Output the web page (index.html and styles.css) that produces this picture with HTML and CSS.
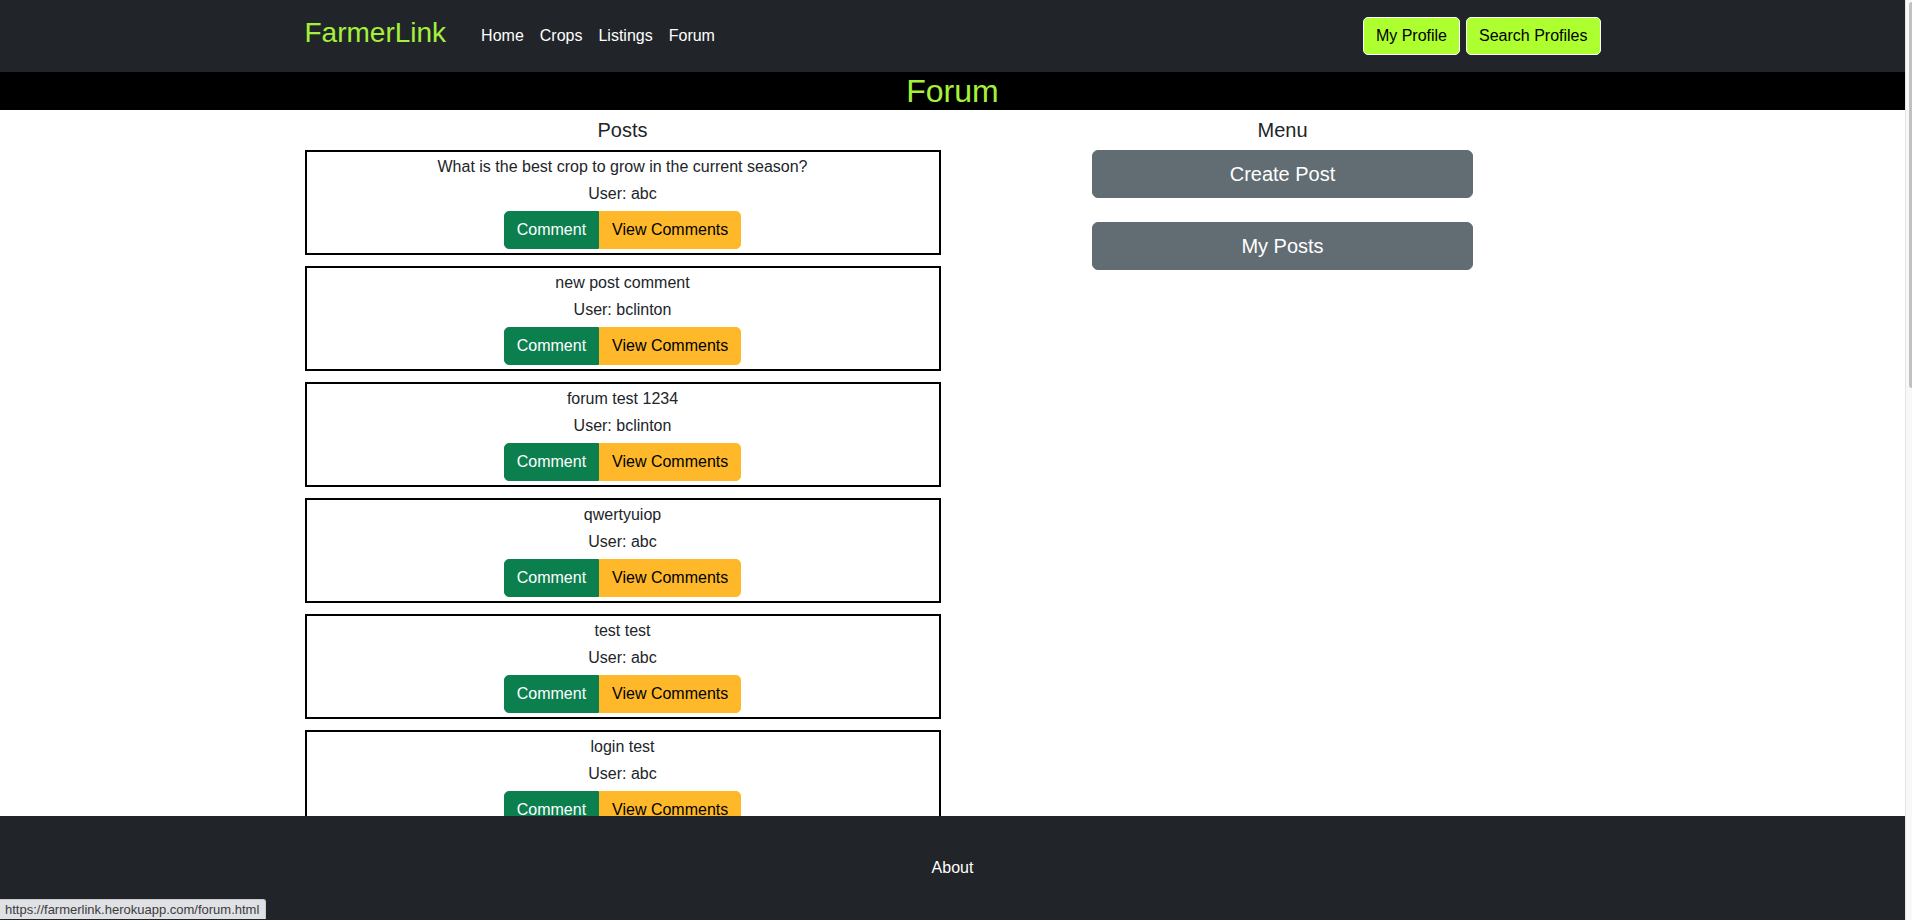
FILE: index.html
```html
<!DOCTYPE html>
<html lang="en">
<head>
<meta charset="utf-8">
<title>FarmerLink - Forum</title>
<link rel="stylesheet" href="styles.css">
</head>
<body>
<div class="page">
  <header class="navbar">
    <div class="container nav-inner">
      <a class="brand" href="#">FarmerLink</a>
      <ul class="nav-links">
        <li><a href="#">Home</a></li>
        <li><a href="#">Crops</a></li>
        <li><a href="#">Listings</a></li>
        <li><a href="#">Forum</a></li>
      </ul>
      <div class="nav-actions">
        <a class="btn btn-lime" href="#">My Profile</a>
        <a class="btn btn-lime" href="#">Search Profiles</a>
      </div>
    </div>
  </header>
  <h2 class="page-title">Forum</h2>
  <main class="main">
    <div class="container grid">
      <section class="col">
        <h5 class="col-title">Posts</h5>
        <div class="post">
          <p class="post-title">What is the best crop to grow in the current season?</p>
          <p class="post-user">User: abc</p>
          <div class="btn-group"><a class="btn btn-comment" href="#">Comment</a><a class="btn btn-view" href="#">View Comments</a></div>
        </div>
        <div class="post">
          <p class="post-title">new post comment</p>
          <p class="post-user">User: bclinton</p>
          <div class="btn-group"><a class="btn btn-comment" href="#">Comment</a><a class="btn btn-view" href="#">View Comments</a></div>
        </div>
        <div class="post">
          <p class="post-title">forum test 1234</p>
          <p class="post-user">User: bclinton</p>
          <div class="btn-group"><a class="btn btn-comment" href="#">Comment</a><a class="btn btn-view" href="#">View Comments</a></div>
        </div>
        <div class="post">
          <p class="post-title">qwertyuiop</p>
          <p class="post-user">User: abc</p>
          <div class="btn-group"><a class="btn btn-comment" href="#">Comment</a><a class="btn btn-view" href="#">View Comments</a></div>
        </div>
        <div class="post">
          <p class="post-title">test test</p>
          <p class="post-user">User: abc</p>
          <div class="btn-group"><a class="btn btn-comment" href="#">Comment</a><a class="btn btn-view" href="#">View Comments</a></div>
        </div>
        <div class="post">
          <p class="post-title">login test</p>
          <p class="post-user">User: abc</p>
          <div class="btn-group"><a class="btn btn-comment" href="#">Comment</a><a class="btn btn-view" href="#">View Comments</a></div>
        </div>
      </section>
      <section class="col">
        <h5 class="col-title">Menu</h5>
        <a class="btn btn-menu" href="#">Create Post</a>
        <a class="btn btn-menu" href="#">My Posts</a>
      </section>
    </div>
  </main>
  <footer class="footer">
    <a href="#">About</a>
  </footer>
</div>
<div class="scrollbar"><div class="thumb"></div></div>
<div class="status">https://farmerlink.herokuapp.com/forum.html</div>
</body>
</html>
```
FILE: styles.css
```css
* { box-sizing: border-box; }

html, body {
  margin: 0;
  height: 100%;
}

body {
  display: flex;
  overflow: hidden;
  font-family: "Liberation Sans", Arial, sans-serif;
  font-size: 16px;
  line-height: 1.5;
  color: #212529;
  background: #fff;
}

a { text-decoration: none; }

.page {
  flex: 1;
  min-width: 0;
  display: flex;
  flex-direction: column;
  height: 100vh;
}

.container {
  width: 100%;
  max-width: 1320px;
  padding: 0 12px;
  margin: 0 auto;
}

/* Navbar */
.navbar {
  background: #212529;
  height: 72px;
  flex: none;
}

.nav-inner {
  display: flex;
  align-items: center;
  height: 100%;
}

.brand {
  color: #a5f03a;
  font-size: 28px;
  line-height: 42px;
  margin-right: 27px;
  margin-bottom: 6px;
}

.nav-links {
  display: flex;
  list-style: none;
  margin: 0;
  padding: 0;
}

.nav-links a {
  display: block;
  color: #fff;
  padding: 8px;
  line-height: 24px;
}

.nav-actions {
  margin-left: auto;
  display: flex;
  gap: 6px;
}

.btn {
  display: inline-block;
  font-size: 16px;
  line-height: 24px;
  padding: 6px 12px;
  border: 1px solid transparent;
  border-radius: 5px;
  text-align: center;
  white-space: nowrap;
}

.btn-lime {
  background: #adff2f;
  border-color: #fff;
  color: #000;
}

/* Page title band */
.page-title {
  flex: none;
  margin: 0;
  background: #000;
  color: #a5f03a;
  font-size: 32px;
  font-weight: 400;
  line-height: 1.2;
  text-align: center;
}

/* Main */
.main {
  flex: 1;
  min-height: 0;
  overflow: hidden;
}

.grid {
  display: grid;
  grid-template-columns: 1fr 1fr;
  column-gap: 24px;
}

.col-title {
  margin: 8px 0;
  font-size: 20px;
  font-weight: 500;
  line-height: 1.2;
  text-align: center;
}

.post {
  border: 2px solid #000;
  padding: 3px 0 4px;
  margin-bottom: 11px;
  text-align: center;
}

.post-title {
  margin: 0 0 3px;
}

.post-user {
  margin: 0 0 5px;
}

.btn-group {
  display: flex;
  justify-content: center;
}

.btn-comment {
  background: #0c7f4f;
  border-color: #0c7f4f;
  color: #fff;
  border-radius: 5px 0 0 5px;
}

.btn-view {
  background: #feb82a;
  border-color: #feb82a;
  color: #000;
  border-radius: 0 5px 5px 0;
}

.btn-menu {
  display: block;
  width: 60%;
  margin: 0 auto 24px;
  padding: 8px 16px;
  font-size: 20px;
  line-height: 30px;
  border-radius: 6px;
  background: #616c73;
  border-color: #616c73;
  color: #fff;
}

/* Footer */
.footer {
  flex: none;
  height: 104px;
  background: #212529;
  display: flex;
  align-items: center;
  justify-content: center;
}

.footer a {
  color: #fff;
}

/* Fake browser scrollbar */
.scrollbar {
  flex: none;
  width: 7px;
  height: 100vh;
  background: #f8f8f8;
  border-left: 1px solid #e4e4e4;
  padding: 2px 0 0 3px;
}

.thumb {
  width: 100%;
  height: 386px;
  background: #c1c1c1;
  border-radius: 3px 0 0 3px;
}

/* Browser status bubble */
.status {
  position: fixed;
  left: 0;
  bottom: 1px;
  height: 20px;
  padding: 0 6px 0 5px;
  background: #dfe1e5;
  border: 1px solid #c9cbcf;
  border-left: none;
  border-bottom: none;
  border-radius: 0 3px 0 0;
  color: #3c3c3c;
  font-size: 13px;
  line-height: 19px;
}
```
